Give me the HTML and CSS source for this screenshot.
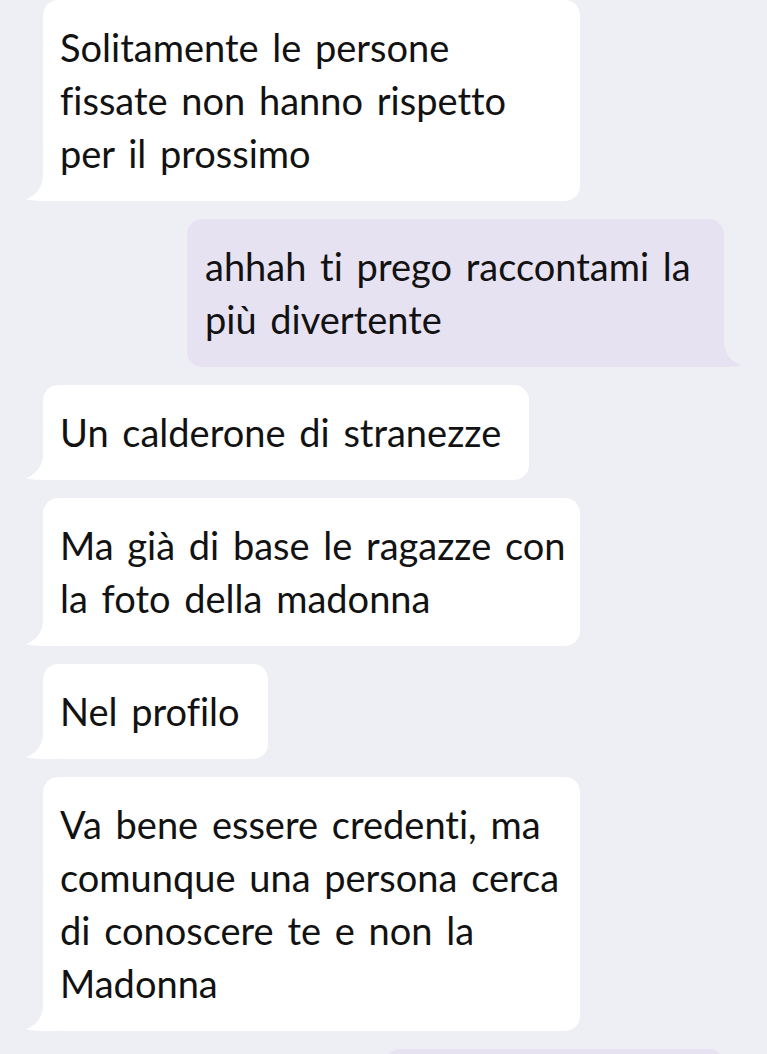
FILE: index.html
```html
<!DOCTYPE html>
<html lang="it">
<head>
    <meta charset="UTF-8">
    <meta name="viewport" content="width=device-width, initial-scale=1.0">
    <title>Chat</title>
    <link rel="stylesheet" href="styles.css">
</head>
<body>
    <div class="chat">
        <div class="msg in wide">Solitamente le persone<br>fissate non hanno rispetto<br>per il prossimo</div>
        <div class="msg out wide">ahhah ti prego raccontami la<br>più divertente</div>
        <div class="msg in">Un calderone di stranezze</div>
        <div class="msg in wide">Ma già di base le ragazze con<br>la foto della madonna</div>
        <div class="msg in">Nel profilo</div>
        <div class="msg in wide">Va bene essere credenti, ma<br>comunque una persona cerca<br>di conoscere te e non la<br>Madonna</div>
        <div class="msg out next"></div>
    </div>
</body>
</html>
```

FILE: styles.css
```css
body {
    margin: 0;
    background-color: #eeeff4;
    font-family: Lato, "Noto Sans", sans-serif;
    color: #121212;
    overflow: hidden;
}
.chat {
    display: flex;
    flex-direction: column;
    gap: 18px;
    padding: 0 43px;
}
.msg {
    position: relative;
    box-sizing: border-box;
    padding: 21px 28px 21px 17px;
    font-size: 38px;
    line-height: 53px;
    word-spacing: 4px;
    font-variant-ligatures: no-common-ligatures;
    border-radius: 15px;
    white-space: nowrap;
}
.msg.wide {
    width: 537px;
    padding-right: 12px;
}
.msg.in {
    align-self: flex-start;
    background-color: #ffffff;
}
.msg.out {
    align-self: flex-end;
    padding-left: 18px;
    background-color: #e6e2f2;
}
/* little tails at the bottom corner */
.msg.in::before,
.msg.out::after {
    content: "";
    position: absolute;
    bottom: 0;
    width: 30px;
    height: 26px;
    background-color: inherit;
}
.msg.in::before {
    left: -17px;
    clip-path: path('M17 0 C17 13 9 21 0 24 C6 26 14 26 30 26 L30 0 Z');
}
.msg.out::after {
    right: -17px;
    clip-path: path('M13 0 C13 13 21 21 30 24 C24 26 16 26 0 26 L0 0 Z');
}
.msg.next {
    width: 339px;
    height: 60px;
}
.msg.next::after {
    display: none;
}
```
